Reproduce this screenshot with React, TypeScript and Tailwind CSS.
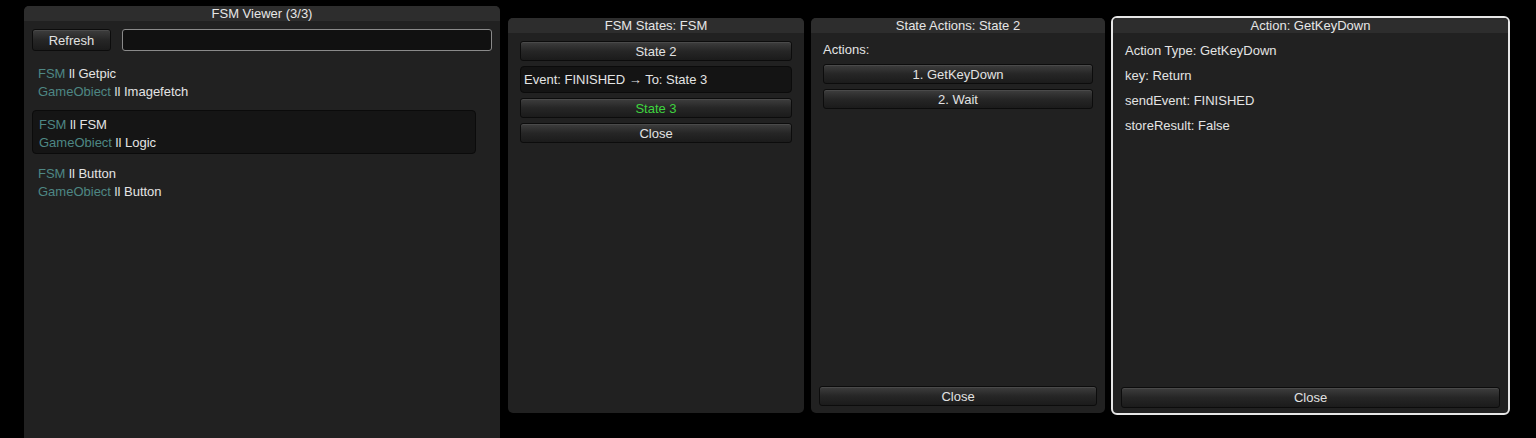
import React from 'react';

const font = { fontFamily: '"Liberation Sans", Arial, sans-serif' };

const Btn: React.FC<{ label: string; className?: string; green?: boolean }> = ({ label, className = '', green }) => (
  <div
    className={`flex items-center justify-center rounded-[3px] border border-[#0c0c0c] bg-linear-to-b from-[#3e3e3e] via-[#262626] to-[#1b1b1b] shadow-[inset_0_1px_0_#4a4a4a] text-[13px] leading-none ${
      green ? 'text-[#3fd43f]' : 'text-[#e2e2e2]'
    } ${className}`}
  >
    {label}
  </div>
);

const Header: React.FC<{ title: string }> = ({ title }) => (
  <div className="h-[15px] shrink-0 bg-[#2d2d2d] text-center text-[13px] leading-[15px] text-[#e6e6e6]">{title}</div>
);

const FsmItem: React.FC<{ fsm: string; obj: string; selected?: boolean }> = ({ fsm, obj, selected }) => (
  <div
    className={`h-[44px] w-[444px] rounded-[4px] pt-[5px] pl-[6px] text-[13px] leading-[18px] ${
      selected ? 'bg-[#151515] border border-[#0b0b0b] pl-[5px] pt-[4px]' : ''
    }`}
  >
    <div>
      <span className="text-[#4e8784]">FSM</span>
      <span className="text-[#e4e4e4]"> ll {fsm}</span>
    </div>
    <div>
      <span className="text-[#4e8784]">GameObiect</span>
      <span className="text-[#e4e4e4]"> ll {obj}</span>
    </div>
  </div>
);

export default function App() {
  return (
    <div className="relative h-[438px] w-[1536px] overflow-hidden bg-black" style={font}>
      {/* FSM Viewer */}
      <div className="absolute left-[24px] top-[6px] flex h-[440px] w-[476px] flex-col overflow-hidden rounded-t-[5px] bg-[#212121]">
        <Header title="FSM Viewer (3/3)" />
        <div className="flex gap-[11px] pl-[8px] pr-[8px] pt-[8px]">
          <Btn label="Refresh" className="h-[22px] w-[79px] pt-[1px]" />
          <div className="h-[22px] flex-1 rounded-[3px] border border-[#8a8a8a] bg-[#111111]" />
        </div>
        <div className="flex flex-col gap-[6px] pl-[8px] pt-[9px]">
          <FsmItem fsm="Getpic" obj="Imagefetch" />
          <FsmItem fsm="FSM" obj="Logic" selected />
          <FsmItem fsm="Button" obj="Button" />
        </div>
      </div>

      {/* FSM States */}
      <div className="absolute left-[508px] top-[18px] flex h-[395px] w-[296px] flex-col overflow-hidden rounded-[5px] bg-[#212121]">
        <Header title="FSM States: FSM" />
        <div className="flex flex-col gap-[5px] px-[12px] pt-[8px]">
          <Btn label="State 2" className="h-[20px]" />
          <div className="flex h-[27px] items-center rounded-[4px] border border-[#0b0b0b] bg-[#141414] pl-[3px] text-[13px] text-[#e4e4e4]">
            Event: FINISHED → To: State 3
          </div>
          <Btn label="State 3" className="h-[20px]" green />
          <Btn label="Close" className="h-[20px]" />
        </div>
      </div>

      {/* State Actions */}
      <div className="absolute left-[811px] top-[18px] flex h-[395px] w-[294px] flex-col overflow-hidden rounded-[5px] bg-[#212121]">
        <Header title="State Actions: State 2" />
        <div className="flex flex-1 flex-col px-[12px] pt-[8px]">
          <div className="h-[17px] text-[13px] leading-[17px] text-[#e4e4e4]">Actions:</div>
          <div className="mt-[6px] flex flex-col gap-[5px]">
            <Btn label="1. GetKeyDown" className="h-[20px]" />
            <Btn label="2. Wait" className="h-[20px]" />
          </div>
        </div>
        <div className="px-[8px] pb-[7px]">
          <Btn label="Close" className="h-[20px]" />
        </div>
      </div>

      {/* Action details */}
      <div className="absolute left-[1111px] top-[16px] flex h-[399px] w-[399px] flex-col overflow-hidden rounded-[6px] border-2 border-[#e6e6e6] bg-[#212121]">
        <Header title="Action: GetKeyDown" />
        <div className="flex flex-1 flex-col gap-[7px] pl-[12px] pt-[9px] text-[13px] leading-[18px] text-[#e4e4e4]">
          <div>Action Type: GetKeyDown</div>
          <div>key: Return</div>
          <div>sendEvent: FINISHED</div>
          <div>storeResult: False</div>
        </div>
        <div className="px-[8px] pb-[5px]">
          <Btn label="Close" className="h-[21px]" />
        </div>
      </div>
    </div>
  );
}
